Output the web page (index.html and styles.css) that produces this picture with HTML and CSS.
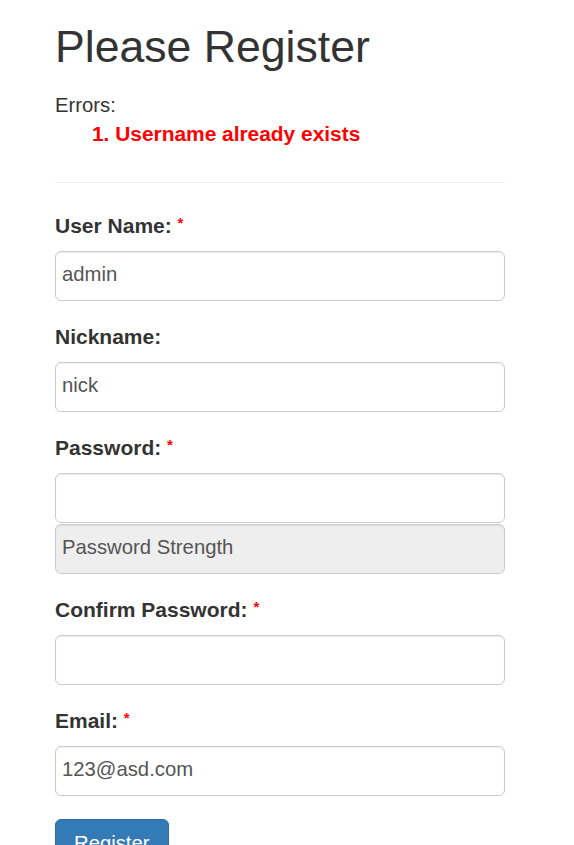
FILE: index.html
```html
<!DOCTYPE html>
<html lang="en">
<head>
<meta charset="utf-8">
<title>Please Register</title>
<link rel="stylesheet" href="styles.css">
</head>
<body>
<div class="container">
  <h1 class="title">Please Register</h1>
  <div class="errors">
    <div class="errors-label">Errors:</div>
    <ol class="error-list">
      <li>Username already exists</li>
    </ol>
  </div>
  <hr class="divider">
  <form class="form">
    <div class="form-group">
      <label class="label" for="username">User Name: <span class="req">*</span></label>
      <input class="input" id="username" type="text" value="admin">
    </div>
    <div class="form-group">
      <label class="label" for="nickname">Nickname:</label>
      <input class="input" id="nickname" type="text" value="nick">
    </div>
    <div class="form-group">
      <label class="label" for="password">Password: <span class="req">*</span></label>
      <input class="input" id="password" type="password" value="">
      <div class="strength">Password Strength</div>
    </div>
    <div class="form-group">
      <label class="label" for="confirm">Confirm Password: <span class="req">*</span></label>
      <input class="input" id="confirm" type="password" value="">
    </div>
    <div class="form-group">
      <label class="label" for="email">Email: <span class="req">*</span></label>
      <input class="input" id="email" type="text" value="123@asd.com">
    </div>
    <button class="btn" type="button">Register</button>
  </form>
</div>
</body>
</html>
```
FILE: styles.css
```css
html, body {
  margin: 0;
  padding: 0;
  background: #fff;
}
body {
  font-family: "Liberation Sans", Arial, Helvetica, sans-serif;
  font-size: 20px;
  line-height: 28px;
  color: #333;
}
.container {
  width: 450px;
  padding-left: 55px;
}
.title {
  font-size: 44.6px;
  font-weight: normal;
  line-height: 50px;
  margin: 22px 0 19px 0;
  color: #333;
}
.errors-label {
  font-size: 20.3px;
  line-height: 28px;
}
.error-list {
  margin: 0;
  padding-left: 37px;
  list-style-position: inside;
  color: #f00;
  font-weight: bold;
  font-size: 20.9px;
}
.error-list li {
  line-height: 30px;
}
.divider {
  border: 0;
  border-top: 1px solid #eee;
  margin: 33px 0 29px 0;
  height: 0;
}
.form-group {
  margin-bottom: 22px;
}
.label {
  display: block;
  font-weight: bold;
  font-size: 21px;
  line-height: 28px;
  margin-bottom: 11px;
  color: #333;
}
.req {
  color: #f00;
  font-size: 15px;
  line-height: 1;
  vertical-align: 5px;
}
.input,
.strength {
  display: block;
  box-sizing: border-box;
  width: 100%;
  height: 50px;
  padding: 0 6px 4px 6px;
  font-family: inherit;
  font-size: 20.3px;
  color: #555;
  background: #fff;
  border: 1px solid #ccc;
  border-radius: 6px;
  box-shadow: inset 0 1px 1px rgba(0,0,0,0.075);
  margin: 0;
}
.strength {
  display: flex;
  align-items: center;
  background: #eee;
  margin-top: 1px;
}
.btn {
  display: inline-block;
  box-sizing: border-box;
  height: 49px;
  padding: 0 18px;
  font-family: inherit;
  font-size: 20.3px;
  color: #fff;
  background: #337ab7;
  border: 1px solid #2e6da4;
  border-radius: 6px;
  margin-top: 1px;
}
```
